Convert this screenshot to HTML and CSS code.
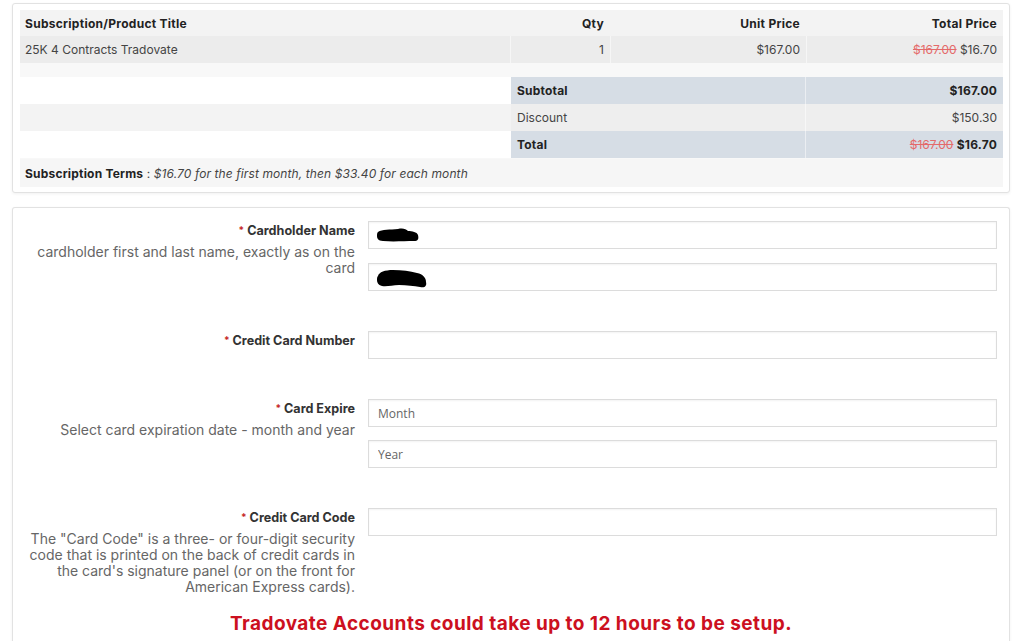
FILE: index.html
```html
<!DOCTYPE html>
<html lang="en">
<head>
<meta charset="utf-8">
<title>Checkout</title>
<link rel="stylesheet" href="styles.css">
</head>
<body>
<div class="page">
  <section class="card summary">
    <div class="grid head">
      <div class="c title">Subscription/Product Title</div>
      <div class="c r">Qty</div>
      <div class="c r">Unit Price</div>
      <div class="c r">Total Price</div>
    </div>
    <div class="grid item">
      <div class="c title">25K 4 Contracts Tradovate</div>
      <div class="c r">1</div>
      <div class="c r">$167.00</div>
      <div class="c r"><span><span class="old">$167.00</span> $16.70</span></div>
    </div>
    <div class="totals-wrap">
      <div class="totals">
        <div class="blank"></div>
        <div class="trow sub"><span class="b">Subtotal</span><span class="b">$167.00</span></div>
        <div class="blank alt"></div>
        <div class="trow disc"><span>Discount</span><span>$150.30</span></div>
        <div class="blank"></div>
        <div class="trow sub"><span class="b">Total</span><span><span><span class="old">$167.00</span> <span class="b">$16.70</span></span></span></div>
      </div>
    </div>
    <div class="terms"><span class="b">Subscription Terms</span> : <em>$16.70 for the first month, then $33.40 for each month</em></div>
  </section>

  <section class="card form">
    <div class="frow">
      <div class="lab">
        <div class="name"><span class="req">*</span> Cardholder Name</div>
        <div class="desc">cardholder first and last name, exactly as on the card</div>
      </div>
      <div class="fields first">
        <div class="fw"><input type="text" aria-label="First name"><svg class="blot b1" viewBox="0 0 42 14" width="42" height="14"><path d="M1 4 C5 1 13 2 21 1 C26 0 29 1 31 3 C35 3 40 4 41 7 C42 11 41 13 37 13 C28 13 16 14 6 13 C1 13 0 10 0 8 C0 6 0 5 1 4Z" fill="#000"/></svg></div>
        <div class="fw"><input type="text" aria-label="Last name"><svg class="blot b2" viewBox="0 0 50 18" width="50" height="18"><path d="M1 6 C2 2 8 0 16 0 C25 0 33 1 40 3 C46 4 49 8 49 12 C50 16 48 18 43 17 C37 16 30 15 22 15 C15 15 10 17 5 16 C1 15 0 12 0 10 C0 8 0 7 1 6Z" fill="#000"/></svg></div>
      </div>
    </div>

    <div class="frow">
      <div class="lab">
        <div class="name"><span class="req">*</span> Credit Card Number</div>
      </div>
      <div class="fields">
        <input type="text" aria-label="Credit Card Number">
      </div>
    </div>

    <div class="frow">
      <div class="lab">
        <div class="name"><span class="req">*</span> Card Expire</div>
        <div class="desc">Select card expiration date - month and year</div>
      </div>
      <div class="fields">
        <input type="text" placeholder="Month" aria-label="Month">
        <input type="text" placeholder="Year" aria-label="Year">
      </div>
    </div>

    <div class="frow">
      <div class="lab">
        <div class="name"><span class="req">*</span> Credit Card Code</div>
        <div class="desc">The "Card Code" is a three- or four-digit security code that is printed on the back of credit cards in the card's signature panel (or on the front for American Express cards).</div>
      </div>
      <div class="fields">
        <input type="text" aria-label="Credit Card Code">
      </div>
    </div>

    <p class="notice">Tradovate Accounts could take up to 12 hours to be setup.</p>
  </section>
</div>
</body>
</html>
```

FILE: styles.css
```css
* { box-sizing: border-box; }
html, body { margin: 0; padding: 0; background: #fff; }
body {
  font-family: "Inter", "Open Sans", sans-serif;
  color: #444;
  width: 1024px;
  height: 641px;
  overflow: hidden;
}
.page { padding: 3px 14px 0 12px; }

.card {
  background: #fff;
  border: 1px solid #e2e2e2;
  border-radius: 3px;
  box-shadow: 0 1px 3px rgba(0,0,0,0.06);
}

.summary { padding: 6px 6px 5px 7px; font-size: 12px; }
.grid {
  display: grid;
  grid-template-columns: 490px 100px 196px 1fr;
}
.grid .c { padding: 0 6px 0 5px; display: flex; align-items: center; }
.grid .r { justify-content: flex-end; }
.head { background: #f3f3f3; height: 26px; color: #222; font-weight: 700; letter-spacing: 0.28px; }
.item { background: #ececec; height: 27px; }
.item .c + .c { border-left: 1px solid #f6f6f6; }

.old { color: #e46a6a; text-decoration: line-through; font-weight: 400; }
.b { font-weight: 700; color: #222; letter-spacing: 0.2px; }

.totals-wrap { background: #f8f8f8; padding: 14px 0 1px; }
.totals {
  display: grid;
  grid-template-columns: 491px 1fr;
  grid-auto-rows: 27px;
}
.blank { background: #fff; }
.blank.alt { background: #f3f3f3; }
.trow {
  display: grid;
  grid-template-columns: 294px 1fr;
  align-items: center;
}
.trow > span { padding: 0 6px; }
.trow > span:last-child { border-left: 1px solid rgba(255,255,255,0.5); height: 100%; display: flex; align-items: center; justify-content: flex-end; }
.sub { background: #d6dde5; }
.disc { background: #eeeeee; }

.terms {
  background: #f6f6f6;
  height: 28px;
  display: flex;
  align-items: center;
  padding-left: 5px;
  white-space: pre;
  letter-spacing: 0.1px;
}
.terms em { font-style: italic; }

.form {
  margin-top: 14px;
  padding: 13px 12px 0 12px;
  border-bottom: none;
  height: 440px;
  border-radius: 3px 3px 0 0;
}
.frow {
  display: grid;
  grid-template-columns: 330px 1fr;
  column-gap: 13px;
  margin-bottom: 40px;
}
.frow:nth-of-type(4) { margin-bottom: 0; }
.lab { text-align: right; padding-top: 1px; }
.name { font-size: 12.6px; font-weight: 700; color: #333; line-height: 16px; margin-bottom: 5px; }
.req { color: #c62828; font-size: 10px; vertical-align: 1px; }
.desc { font-size: 14px; line-height: 16px; color: #666; }

.fields { display: flex; flex-direction: column; gap: 13px; }
.fields.first { gap: 14px; }
.fw { position: relative; }
input {
  display: block;
  width: 100%;
  height: 28px;
  border: 1px solid #dcdcdc;
  background: #fff;
  box-shadow: inset 0 1px 2px rgba(0,0,0,0.05);
  padding: 0 9px;
  font-family: "Open Sans", sans-serif;
  font-size: 12px;
  color: #555;
  outline: none;
}
input::placeholder { color: #666; }
.blot { position: absolute; }
.b1 { left: 9px; top: 7px; }
.b2 { left: 9px; top: 7px; }

.notice {
  margin: 17px 0 0;
  text-align: center;
  color: #cc1020;
  font-size: 19px;
  font-weight: 700;
  line-height: 24px;
  letter-spacing: 0.45px;
}
```
